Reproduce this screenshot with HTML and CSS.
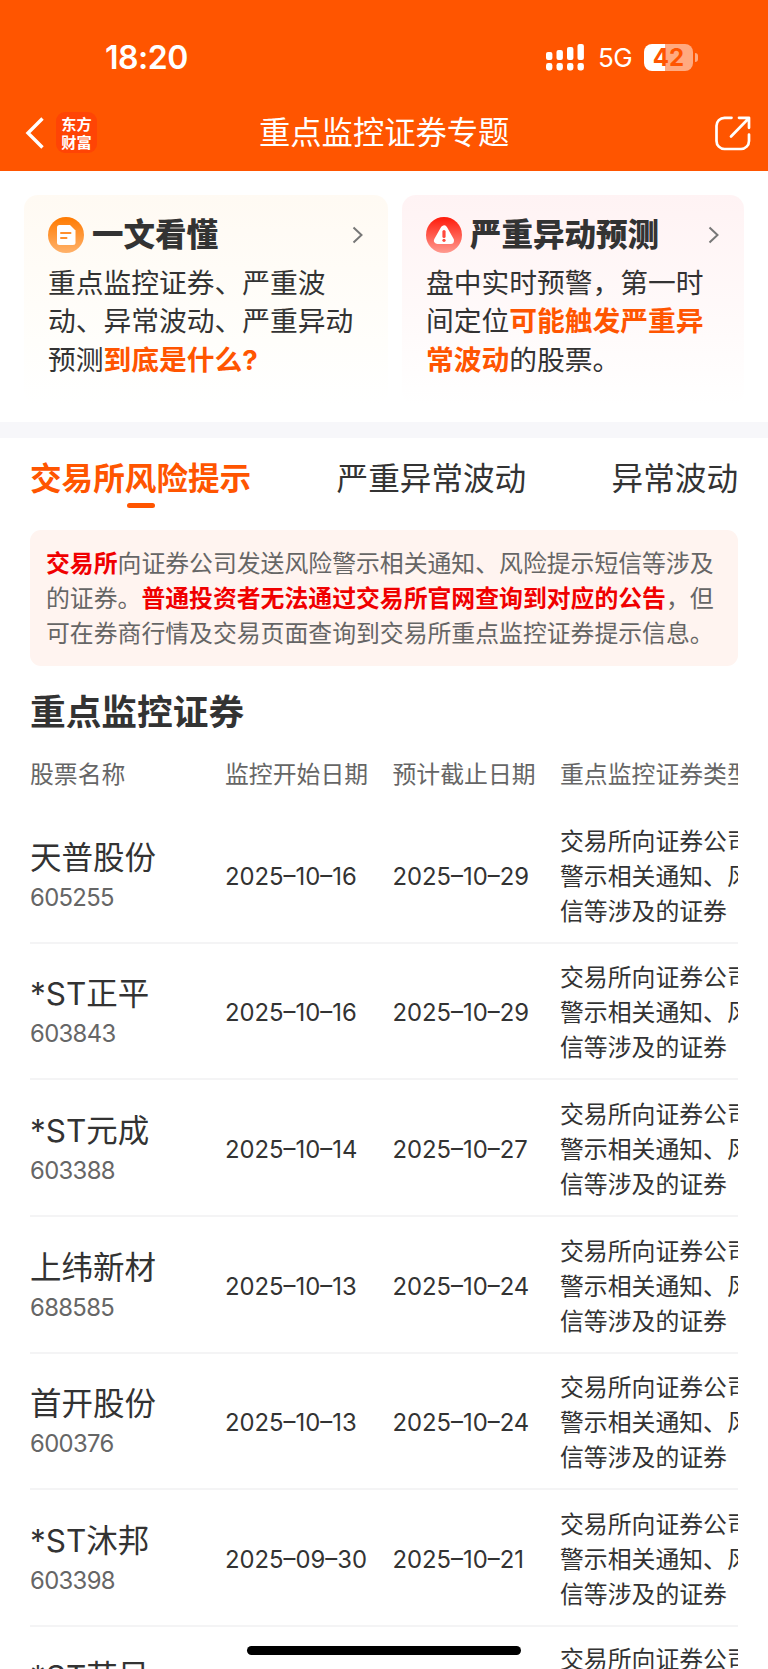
FILE: index.html
```html
<!DOCTYPE html>
<html lang="zh-CN">
<head>
<meta charset="UTF-8">
<title>重点监控证券专题</title>
<link rel="stylesheet" href="styles.css">
</head>
<body>
<div class="screen">
  <header class="top">
    <div class="status">
      <span class="clock">18:20</span>
      <svg class="signal" width="38" height="27" viewBox="0 0 38 27" fill="#fff">
        <rect x="0" y="8" width="6.4" height="8" rx="2"/><rect x="10.5" y="6" width="6.4" height="10" rx="2"/><rect x="21" y="3" width="6.4" height="13" rx="2"/><rect x="31.5" y="0" width="6.4" height="16" rx="2"/>
        <rect x="0" y="19" width="6.4" height="7.4" rx="2.4"/><rect x="10.5" y="19" width="6.4" height="7.4" rx="2.4"/><rect x="21" y="19" width="6.4" height="7.4" rx="2.4"/><rect x="31.5" y="19" width="6.4" height="7.4" rx="2.4"/>
      </svg>
      <span class="net">5G</span>
      <span class="battery">42</span>
      <span class="battery-tip"></span>
    </div>
    <nav class="nav">
      <svg class="back" width="20" height="32" viewBox="0 0 20 32" fill="none" stroke="#fff" stroke-width="3.4"><path d="M17.5 1.5 3 16l14.500 14.500"/></svg>
      <span class="logo"><span>东方</span><span>财富</span></span>
      <h1 class="title">重点监控证券专题</h1>
      <svg class="share" width="36" height="36" viewBox="0 0 36 36" fill="none" stroke="#fff" stroke-width="2.700" stroke-linecap="round" stroke-linejoin="round"><path d="M16.500 1.800H9.500a8 8 0 0 0-8 8V25a8 8 0 0 0 8 8H26a8 8 0 0 0 8-8v-6.500"/><path d="M16 20.500 33.500 2.500M24 1.800h10v10"/></svg>
    </nav>
  </header>

  <section class="cards">
    <article class="card card-guide">
      <div class="card-head">
        <svg width="36" height="36" viewBox="0 0 36 36"><defs><linearGradient id="g1" x2="0" y2="1"><stop stop-color="#ff7a00"/><stop offset="1" stop-color="#ffb26b"/></linearGradient></defs><circle cx="18" cy="18" r="18" fill="url(#g1)"/><path d="M11.500 8h10.500l5.500 5.500V25.500a2.500 2.500 0 0 1-2.500 2.500H11.500A2.500 2.500 0 0 1 9 25.500V10.500A2.500 2.500 0 0 1 11.500 8Z" fill="#fff"/><path d="M13 16h9.500M13 21h5.500" stroke="#ff8f2b" stroke-width="2" stroke-linecap="round"/></svg>
        <h2>一文看懂</h2>
        <svg class="chev" width="12" height="18" viewBox="0 0 12 18" fill="none" stroke="#777" stroke-width="2"><path d="m1.500 1.500 8 7.500-8 7.500"/></svg>
      </div>
      <p>重点监控证券、严重波<br>动、异常波动、严重异动<br>预测<b>到底是什么?</b></p>
    </article>
    <article class="card card-alert">
      <div class="card-head">
        <svg width="36" height="36" viewBox="0 0 36 36"><defs><linearGradient id="g2" x2="0" y2="1"><stop stop-color="#ff1a0a"/><stop offset="1" stop-color="#ff9a90"/></linearGradient></defs><circle cx="18" cy="18" r="18" fill="url(#g2)"/><path d="M18 12 11.500 23.500h13Z" fill="#fff" stroke="#fff" stroke-width="7" stroke-linejoin="round"/><path d="M18 14.500v5" stroke="#ff4a3d" stroke-width="3.200" stroke-linecap="round"/><circle cx="18" cy="23.300" r="1.600" fill="#ff4a3d"/></svg>
        <h2>严重异动预测</h2>
        <svg class="chev" width="12" height="18" viewBox="0 0 12 18" fill="none" stroke="#777" stroke-width="2"><path d="m1.500 1.500 8 7.500-8 7.500"/></svg>
      </div>
      <p>盘中实时预警，第一时<br>间定位<b>可能触发严重异<br>常波动</b>的股票。</p>
    </article>
  </section>

  <div class="band"></div>

  <nav class="tabs">
    <span class="tab active">交易所风险提示</span>
    <span class="tab">严重异常波动</span>
    <span class="tab">异常波动</span>
  </nav>

  <p class="notice"><b>交易所</b>向证券公司发送风险警示相关通知、风险提示短信等涉及<br>的证券。<b>普通投资者无法通过交易所官网查询到对应的公告</b>，但<br>可在券商行情及交易页面查询到交易所重点监控证券提示信息。</p>

  <h2 class="heading">重点监控证券</h2>

  <section class="table">
    <div class="row row-head"><span>股票名称</span><span>监控开始日期</span><span>预计截止日期</span><span>重点监控证券类型</span></div>
    <div class="row"><div><div class="name">天普股份</div><div class="code">605255</div></div><span>2025–10–16</span><span>2025–10–29</span><span class="kind">交易所向证券公司发送风险警示相关通知、风险提示短信等涉及的证券</span></div>
    <div class="row"><div><div class="name">*ST正平</div><div class="code">603843</div></div><span>2025–10–16</span><span>2025–10–29</span><span class="kind">交易所向证券公司发送风险警示相关通知、风险提示短信等涉及的证券</span></div>
    <div class="row"><div><div class="name">*ST元成</div><div class="code">603388</div></div><span>2025–10–14</span><span>2025–10–27</span><span class="kind">交易所向证券公司发送风险警示相关通知、风险提示短信等涉及的证券</span></div>
    <div class="row"><div><div class="name">上纬新材</div><div class="code">688585</div></div><span>2025–10–13</span><span>2025–10–24</span><span class="kind">交易所向证券公司发送风险警示相关通知、风险提示短信等涉及的证券</span></div>
    <div class="row"><div><div class="name">首开股份</div><div class="code">600376</div></div><span>2025–10–13</span><span>2025–10–24</span><span class="kind">交易所向证券公司发送风险警示相关通知、风险提示短信等涉及的证券</span></div>
    <div class="row"><div><div class="name">*ST沐邦</div><div class="code">603398</div></div><span>2025–09–30</span><span>2025–10–21</span><span class="kind">交易所向证券公司发送风险警示相关通知、风险提示短信等涉及的证券</span></div>
    <div class="row row-last"><div class="name">*ST苏吴</div><span></span><span></span><span class="kind">交易所向证券公司发送风险警示相关通知、风险提示短信等涉及的证券</span></div>
  </section>
  <div class="home"></div>
</div>
</body>
</html>
```
FILE: styles.css
```css
* { box-sizing: border-box; }
body { margin: 0; background: #fff; color: #333; font-family: Inter, "Noto Sans CJK SC", sans-serif; }
h1, h2, p { margin: 0; }
.screen { position: relative; width: 768px; height: 1669px; overflow: hidden; }

.top { height: 171px; background: #ff5500; color: #fff; }
.status { display: flex; align-items: center; height: 92px; padding: 22px 70px 0 105px; }
.clock { flex: 1; font-size: 32px; font-weight: 600; line-height: 40px; letter-spacing: -0.500px; padding-top: 2px; }
.signal { margin-right: 14px; }
.net { width: 46px; font-size: 26px; line-height: 36px; letter-spacing: -0.500px; padding-top: 2px; }
.battery { width: 49px; height: 27px; border-radius: 8px; background: linear-gradient(90deg, #fff 42%, #ffaa80 42%); color: #ff5500; font-size: 24px; font-weight: 700; line-height: 27px; text-align: center; }
.battery-tip { width: 3px; height: 9px; margin-left: 2px; border-radius: 0 4px 4px 0; background: #ffaa80; }
.nav { display: flex; align-items: center; height: 80px; padding: 1px 17px 0 25px; }
.logo { display: flex; flex-direction: column; justify-content: center; align-items: center; gap: 2px; width: 41px; height: 41px; margin-left: 11px; border-radius: 9px; background: #ff4405; font-family: "Noto Sans CJK SC", sans-serif; font-size: 15.200px; font-weight: 700; }
.logo span { line-height: 15.500px; }
.title { flex: 1; padding-left: 162px; font-size: 31.300px; font-weight: 400; line-height: 44px; white-space: nowrap; }
.share { margin-top: 3px; }

.cards { display: flex; gap: 14px; height: 251px; padding: 24px 24px 17px; }
.card { padding: 22px 24px 0; border-radius: 14px; }
.card-guide { width: 364px; background: linear-gradient(#fffaf3, #fffefb 70%, #fff); }
.card-alert { width: 342px; background: linear-gradient(#fff3f4, #fffafa 60%, #fff); }
.card-head { display: flex; align-items: center; height: 36px; }
.card-head h2 { margin-left: 8px; font-size: 31.500px; font-weight: 900; line-height: 36px; white-space: nowrap; }
.chev { margin-left: auto; }
.card p { margin-top: 11px; font-size: 27.750px; line-height: 38.400px; white-space: nowrap; }
.card b { color: #ff5500; }

.band { height: 16px; background: #f7f7fa; }
.tabs { display: flex; justify-content: space-between; height: 92px; padding: 19px 30px 0; font-size: 31.600px; line-height: 44px; }
.tab.active { display: flex; flex-direction: column; align-items: center; color: #ff5500; font-weight: 700; }
.tab.active::after { content: ""; width: 28px; height: 5px; margin-top: 2px; border-radius: 3px; background: #ff5500; }

.notice { height: 136px; margin: 0 30px; padding: 16px 16px 14px; border-radius: 11px; background: #fff4f0; color: #666; font-size: 23.850px; line-height: 35px; white-space: nowrap; }
.notice b { color: #f00000; }
.heading { margin: 22px 30px 0; font-size: 35.700px; line-height: 48px; }

.table { margin: 16px 30px 0; overflow: hidden; font-size: 23.850px; }
.row { display: grid; grid-template-columns: 195px 167.500px 167.500px 288px; align-items: center; width: 818px; height: 136.660px; padding-top: 4px; border-bottom: 2px solid #f4f4f5; line-height: 35px; }
.row-head { height: 55px; padding: 0 0 10px; border: 0; color: #666; }
.name { font-size: 31.500px; line-height: 42px; }
.code { margin-top: 1px; color: #666; line-height: 36px; letter-spacing: -0.650px; }
.row-last { align-items: start; padding-top: 15px; }
.row-last .name { margin-top: 14px; }
.home { position: absolute; left: 247px; bottom: 14px; width: 274px; height: 9px; border-radius: 5px; background: #000; }
```
